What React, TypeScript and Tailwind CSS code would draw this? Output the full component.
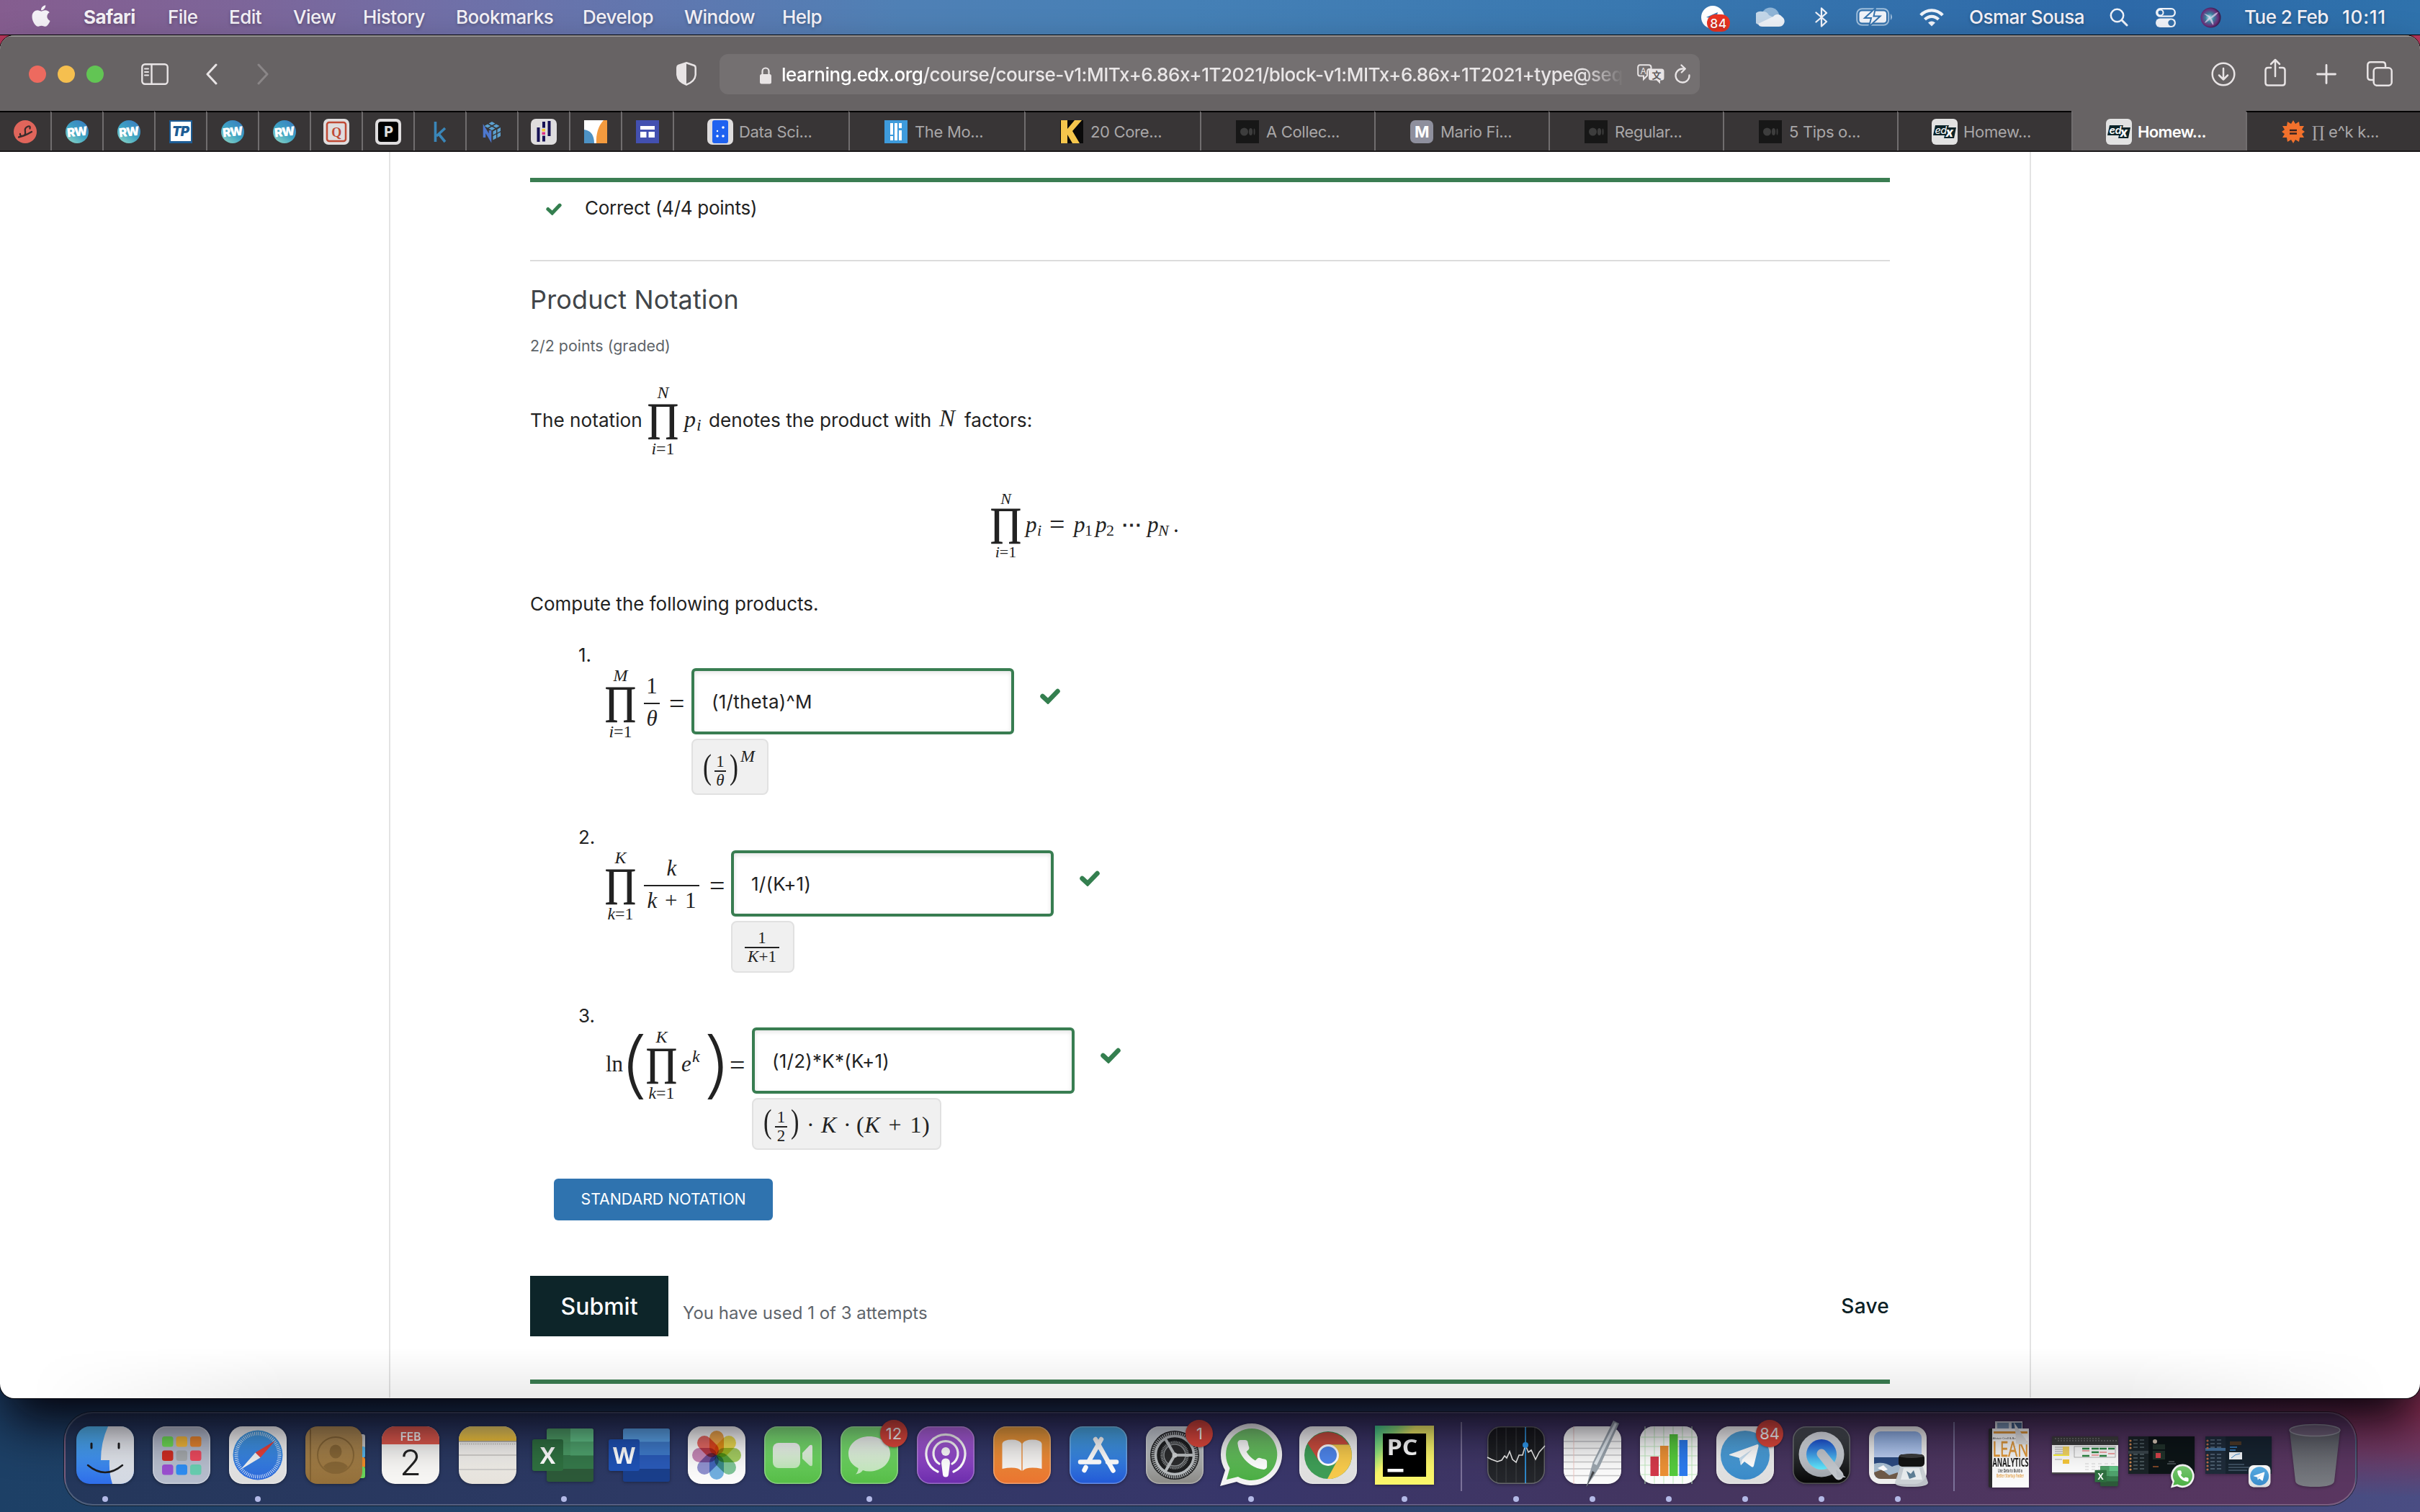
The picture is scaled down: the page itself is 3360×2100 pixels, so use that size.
import React from "react";
import type { ReactNode } from "react";
import { FaApple } from "react-icons/fa";

/* ---------------------------------------------------------------- menu bar */

const MENUS: { label: string; cls: string }[] = [
  { label: "Safari", cls: "w-[117px] font-bold" },
  { label: "File", cls: "w-[85px] font-medium" },
  { label: "Edit", cls: "w-[89px] font-medium" },
  { label: "View", cls: "w-[97px] font-medium" },
  { label: "History", cls: "w-[129px] font-medium" },
  { label: "Bookmarks", cls: "w-[176px] font-medium" },
  { label: "Develop", cls: "w-[141px] font-medium" },
  { label: "Window", cls: "w-[136px] font-medium" },
  { label: "Help", cls: "w-[70px] font-medium" },
];

function MenuBar() {
  return (
    <header className="flex h-12 shrink-0 items-center bg-[linear-gradient(to_right,#855d8f_0px,#7d6599_330px,#6f70a8_640px,#5e78b0_950px,#4f80b5_1250px,#4580b6_1650px,#3978b0_2250px,#2d69a8_2950px,#2f72ac_3360px)] text-[26px] leading-none tracking-[-0.02em] text-[#f4f1f6] [text-shadow:0_2px_4px_rgba(0,0,0,0.25)]">
      <FaApple className="ml-[40px] h-[34px] w-[34px] -translate-y-[2px]" />
      <nav className="ml-[42px] flex">
        {MENUS.map((m) => (
          <span key={m.label} className={m.cls}>
            {m.label}
          </span>
        ))}
      </nav>
      <div className="ml-auto flex h-full items-center font-medium">
        <svg className="h-[48px] w-[44px]" viewBox="0 0 44 48">
          <circle cx="18" cy="24" r="16" fill="#fff" />
          <path d="M9 24 L25 17 L24 21 L15 25 Z" fill="#3a75ad" />
          <rect x="10" y="20" width="32" height="24" rx="12" fill="#ec3323" />
          <text x="26" y="38.5" textAnchor="middle" fontSize="17.5" fontWeight="500" fill="#fff" fontFamily="Inter, sans-serif" letterSpacing="0.5">84</text>
        </svg>
        <svg className="ml-[34px] h-[28px] w-[40px]" viewBox="0 0 40 28">
          <circle cx="20" cy="13" r="12.5" fill="#8fb4d6" />
          <path d="M9 6 a9 9 0 0 1 9 5 L26 15 L3 24 A9.500 9.500 0 0 1 9 6 Z" fill="#c3d6e8" />
          <path d="M3 23 L24 13 C27 9 33 9 36 13 C43 18 39 27 32 27 H9 C6 27 4 26 3 23 Z" fill="#edf1f7" />
        </svg>
        <svg className="ml-[42px] h-[28px] w-[18px]" viewBox="0 0 18 28" fill="none" stroke="#f1f2f8" strokeWidth="2.300" strokeLinejoin="round" strokeLinecap="round">
          <path d="M1.500 7.500 L16 20 L9 26.500 V1.500 L16 8 L1.500 20.500" />
        </svg>
        <svg className="ml-[39px] h-[26px] w-[52px]" viewBox="0 0 52 26">
          <rect x="1.200" y="1.200" width="44" height="22.600" rx="7" fill="none" stroke="#9fbedb" strokeWidth="2" />
          <rect x="4.500" y="4.500" width="37.500" height="16" rx="4" fill="#f0f3f9" />
          <path d="M48 8 q4 4.500 0 9 Z" fill="#9fbedb" />
          <path d="M27 0 L12 14 H21 L18 26 L33.500 11.500 H24.500 Z" fill="#f0f3f9" stroke="#3573ae" strokeWidth="2" />
        </svg>
        <svg className="ml-[36px] h-[25px] w-[34px]" viewBox="0 0 34 25" fill="none" stroke="#f0f3f9" strokeWidth="4.200">
          <path d="M1.800 9.200 C10 0 24 0 32.200 9.200" />
          <path d="M7.500 15 C13 9.500 21 9.500 26.500 15" />
          <path d="M12 19.500 Q17 15.500 22 19.500 L17 24.500 Z" fill="#f0f3f9" stroke="none" />
        </svg>
        <span className="ml-[35px] w-[164px]">Osmar Sousa</span>
        <svg className="ml-[31px] h-[26px] w-[26px]" viewBox="0 0 26 26" fill="none" stroke="#f0f3f9" strokeLinecap="round">
          <circle cx="10.500" cy="10.500" r="8.700" strokeWidth="2.500" />
          <path d="M17 17 L24 24" strokeWidth="3" />
        </svg>
        <svg className="ml-[38px] h-[27px] w-[28px]" viewBox="0 0 28 27">
          <rect x="1.200" y="1.200" width="25.600" height="10.500" rx="5.200" fill="none" stroke="#f0f3f9" strokeWidth="2.300" />
          <circle cx="6.500" cy="6.500" r="4" fill="none" stroke="#f0f3f9" strokeWidth="2" />
          <rect x="0" y="14.500" width="28" height="12.500" rx="6.200" fill="#f0f3f9" />
          <circle cx="21.500" cy="20.700" r="4.200" fill="#3570aa" />
        </svg>
        <svg className="ml-[34px] h-[29px] w-[29px]" viewBox="0 0 29 29">
          <defs>
            <radialGradient id="siri" cx="0.45" cy="0.5" r="0.6">
              <stop offset="0" stopColor="#b7f0f2" />
              <stop offset="0.35" stopColor="#3a7f9e" />
              <stop offset="0.7" stopColor="#6b2f7c" />
              <stop offset="1" stopColor="#1c1430" />
            </radialGradient>
          </defs>
          <circle cx="14.500" cy="14.500" r="14" fill="url(#siri)" />
          <path d="M5 9 Q12 10 14.500 14.500 Q19 8 25 7 Q21 13 15 15.500 Q19 20 18 25 Q14 21 13.500 16.500 Q9 21 6 22 Q8 17 12.500 14.500 Q8 12 5 9Z" fill="#e9d3f0" opacity="0.7" />
        </svg>
        <span className="ml-[32px] w-[136px]">Tue 2 Feb</span>
        <span className="w-[108px] tracking-[0.03em]">10:11</span>
      </div>
    </header>
  );
}

/* ----------------------------------------------------------------- toolbar */

function Toolbar() {
  return (
    <div className="flex h-[105px] shrink-0 items-center border-t-2 border-[#959293] bg-[#676364]">
      <div className="ml-[40px] flex gap-4">
        <span className="size-6 rounded-full bg-[#ed6a5f]" />
        <span className="size-6 rounded-full bg-[#f5bf4f]" />
        <span className="size-6 rounded-full bg-[#62c554]" />
      </div>
      <svg className="ml-[52px] h-[30px] w-[38px]" viewBox="0 0 38 30" fill="none" stroke="#e8e4e5" strokeWidth="2.400" strokeLinecap="round">
        <rect x="1.300" y="1.300" width="35.400" height="27.400" rx="4" />
        <path d="M14.500 1.500 V28.500" />
        <path d="M5 7.500 H10 M5 12 H10 M5 16.500 H10" strokeWidth="2" />
      </svg>
      <svg className="ml-[51px] h-[30px] w-[18px]" viewBox="0 0 18 30" fill="none" stroke="#e8e4e5" strokeWidth="3" strokeLinecap="round" strokeLinejoin="round">
        <path d="M15 2 L3 15 L15 28" />
      </svg>
      <svg className="ml-[53px] h-[30px] w-[18px]" viewBox="0 0 18 30" fill="none" stroke="#8a8687" strokeWidth="3" strokeLinecap="round" strokeLinejoin="round">
        <path d="M3 2 L15 15 L3 28" />
      </svg>
      <svg className="ml-[565px] h-[33px] w-[28px]" viewBox="0 0 28 33">
        <path d="M14 1.300 L25 5 Q26.700 5.800 26.700 8 V18 Q26 27 14 31.700 Q2 27 1.300 18 V8 Q1.300 5.800 3 5 Z" fill="none" stroke="#e8e4e5" strokeWidth="2.500" />
        <path d="M14 1.300 L3 5 Q1.300 5.800 1.300 8 V18 Q2 27 14 31.700 Z" fill="#e8e4e5" />
      </svg>
      <div className="ml-[32px] flex h-14 w-[1361px] items-center rounded-[12px] bg-[#747071] text-[26px] leading-none tracking-[-0.0185em]">
        <svg className="ml-[56px] h-6 w-4 translate-y-[2px]" viewBox="0 0 16 24">
          <path d="M3.500 11 V6 a4.500 4.500 0 0 1 9 0 V11" fill="none" stroke="#e8e4e5" strokeWidth="2.200" />
          <rect x="0" y="10" width="16" height="13.500" rx="2.500" fill="#e8e4e5" />
        </svg>
        <div className="ml-[14px] flex h-10 w-[1171px] items-center overflow-hidden whitespace-nowrap pt-[3px] font-medium [mask-image:linear-gradient(to_right,black_1112px,transparent_1169px)]">
          <span className="text-white">learning.edx.org</span>
          <span className="text-[#e9e6e7]">/course/course-v1:MITx+6.86x+1T2021/block-v1:MITx+6.86x+1T2021+type@sequ</span>
        </div>
        <svg className="ml-[17px] h-[28px] w-[38px]" viewBox="0 0 38 28">
          <path d="M4 1.200 H16 Q19.500 1.200 19.500 4.500 V7 H17 Q14 7 14 11 V16 L9 21 V16.500 H4 Q1.200 16.500 1.200 13.500 V4.500 Q1.200 1.200 4 1.200 Z" fill="none" stroke="#e8e4e5" strokeWidth="2" />
          <text x="8.500" y="13.500" textAnchor="middle" fontSize="12" fontFamily="Inter, sans-serif" fill="#e8e4e5">A</text>
          <path d="M19 6.500 H34 Q37.500 6.500 37.500 10 V19 Q37.500 22.500 34 22.500 H32 V27.500 L27 22.500 H19 Q16 22.500 16 19 V10 Q16 6.500 19 6.500 Z" fill="#e8e4e5" />
          <text x="26.700" y="19.500" textAnchor="middle" fontSize="13" fontWeight="700" fontFamily="'Noto Sans CJK SC', sans-serif" fill="#5f5b5c">文</text>
        </svg>
        <svg className="ml-[14px] h-[27px] w-[22px]" viewBox="0 0 22 27" fill="none" stroke="#e8e4e5" strokeWidth="2.300" strokeLinecap="round" strokeLinejoin="round">
          <path d="M20.500 15.500 A9.500 9.500 0 1 1 11 6.500 H14" />
          <path d="M9.500 1.500 L14.800 6.500 L9.800 11.500" />
        </svg>
      </div>
      <div className="ml-auto flex items-center">
        <svg className="size-[34px]" viewBox="0 0 34 34" fill="none" stroke="#e8e4e5" strokeWidth="2.500" strokeLinecap="round" strokeLinejoin="round">
          <circle cx="17" cy="17" r="15.300" />
          <path d="M17 9 V24 M11 18.500 L17 24.500 L23 18.500" />
        </svg>
        <svg className="ml-[40px] h-[40px] w-[30px] -translate-y-[2px]" viewBox="0 0 30 40" fill="none" stroke="#e8e4e5" strokeWidth="2.500" strokeLinecap="round" strokeLinejoin="round">
          <path d="M9 13 H5 Q1.500 13 1.500 16.500 V34 Q1.500 37.500 5 37.500 H25 Q28.500 37.500 28.500 34 V16.500 Q28.500 13 25 13 H21" />
          <path d="M15 25 V2 M9 8 L15 2 L21 8" />
        </svg>
        <svg className="ml-[42px] size-[28px]" viewBox="0 0 28 28" fill="none" stroke="#e8e4e5" strokeWidth="2.800" strokeLinecap="round">
          <path d="M14 1.500 V26.500 M1.500 14 H26.500" />
        </svg>
        <svg className="mr-[38px] ml-[42px] h-[35px] w-[36px]" viewBox="0 0 36 35" fill="none" stroke="#e8e4e5" strokeWidth="2.500" strokeLinejoin="round">
          <rect x="9.700" y="9.300" width="25" height="24.500" rx="4.500" />
          <path d="M9 26 H5.500 Q1.300 26 1.300 22 V5.500 Q1.300 1.300 5.500 1.300 H22 Q26 1.300 26 5.500 V8.500" />
        </svg>
      </div>
    </div>
  );
}

/* -------------------------------------------------------------- favicons */

const SANS = "Inter, 'Liberation Sans', sans-serif";

const RwIcon = () => (
  <svg className="size-8" viewBox="0 0 32 32">
    <defs>
      <linearGradient id="rw" x1="0.1" y1="1" x2="0.8" y2="0">
        <stop offset="0" stopColor="#8fd6c4" />
        <stop offset="0.5" stopColor="#3ea4c4" />
        <stop offset="1" stopColor="#3a7fc0" />
      </linearGradient>
    </defs>
    <circle cx="16" cy="16" r="16" fill="url(#rw)" />
    <text x="15.500" y="22" textAnchor="middle" fontSize="17" fontWeight="900" letterSpacing="-1.500" fill="#fff" fontFamily={SANS} transform="rotate(-6 16 16)">RW</text>
  </svg>
);
const ScribdIcon = () => (
  <svg className="size-8" viewBox="0 0 32 32">
    <circle cx="16" cy="16" r="16" fill="#e0655b" />
    <path d="M22.500 11.500 Q23.500 7.500 20 8.500 Q14.500 10.500 16 16 Q17 21.500 12 22 Q8.500 22 9 19 M7 23.500 Q15 22 25 16" fill="none" stroke="#3a2b2c" strokeWidth="2.300" strokeLinecap="round" />
  </svg>
);
const TpIcon = () => (
  <svg className="size-8" viewBox="0 0 32 32">
    <rect width="32" height="32" fill="#1d5c94" />
    <rect x="2" y="2" width="28" height="27" fill="#fff" />
    <text x="15.500" y="22" textAnchor="middle" fontSize="18.500" fontStyle="italic" fontWeight="900" letterSpacing="-0.800" fill="#1d5c94" fontFamily={SANS}>TP</text>
  </svg>
);
const QIcon = () => (
  <svg className="size-9" viewBox="0 0 36 36">
    <rect width="36" height="36" rx="7" fill="#dfddde" />
    <rect x="5" y="5" width="26" height="26" rx="3" fill="none" stroke="#c04a35" strokeWidth="2.500" />
    <text x="18" y="24.500" textAnchor="middle" fontSize="18" fontWeight="700" fill="#c04a35" fontFamily="'Liberation Serif', serif">Q</text>
  </svg>
);
const PIcon = () => (
  <svg className="size-9" viewBox="0 0 36 36">
    <rect width="36" height="36" rx="7" fill="#dfddde" />
    <rect x="4" y="4" width="28" height="28" rx="4" fill="#000" />
    <text x="18.500" y="25" textAnchor="middle" fontSize="19.500" fontWeight="800" fill="#ddd" fontFamily={SANS}>P</text>
  </svg>
);
const KaggleIcon = () => (
  <svg className="size-8" viewBox="0 0 32 32">
    <path d="M9.500 2 V30 M23 11 L11 22 M14 19 L23 30" fill="none" stroke="#3a86b8" strokeWidth="3.600" />
  </svg>
);
const NumpyIcon = () => (
  <svg className="size-8" viewBox="0 0 32 32">
    <g fill="#5ba0cf">
      <path d="M16 2 L20.500 4.500 L16 7 L11.500 4.500Z M10 5.500 L14.500 8 L10 10.500 L5.500 8Z M22 5.500 L26.500 8 L22 10.500 L17.500 8Z M16 9 L20.500 11.500 L16 14 L11.500 11.500Z" />
      <path d="M17.500 15.500 L22 13 V18 L17.500 20.500Z M23.500 12.500 L28 10 V15 L23.500 17.500Z M17.500 22 L22 19.500 V25 L17.500 27.500Z M23.500 19 L28 16.500 V22 L23.500 24.500Z" />
    </g>
    <path d="M5.500 24 V11.500 L13.500 25 V14" fill="none" stroke="#4d77cf" strokeWidth="3.600" />
  </svg>
);
const PandasIcon = () => (
  <svg className="size-9" viewBox="0 0 36 36">
    <rect width="36" height="36" rx="7" fill="#dfddde" />
    <path d="M8.500 12 h4 V32 h-4Z M16 4 h4 v8.500 h-4Z M16 23.500 h4 v8 h-4Z M23.500 3 h4 V24 h-4Z" fill="#171256" />
    <rect x="15.500" y="14" width="4.500" height="3.500" fill="#f5c633" />
    <rect x="15.500" y="18.500" width="4.500" height="3.500" fill="#dd2f83" />
  </svg>
);
const SwooshIcon = () => (
  <svg className="size-8" viewBox="0 0 32 32">
    <rect width="32" height="32" fill="#fff" />
    <path d="M32 0 V32 H17 Q16 12 27 0Z" fill="#f39a3e" />
    <path d="M0 13 Q14 15 14 32 H0Z" fill="#4d92c5" />
  </svg>
);
const FormsIcon = () => (
  <svg className="size-8" viewBox="0 0 32 32">
    <rect width="32" height="32" fill="#4350b0" />
    <path d="M6 8 H26 V13 H6Z M6 16 H14.500 V24 H6Z M17.500 16 H26 V24 H17.500Z" fill="#fff" />
  </svg>
);
const DiceIcon = () => (
  <svg className="size-9" viewBox="0 0 36 36">
    <rect width="36" height="36" rx="7" fill="#dfddde" />
    <rect x="7" y="2" width="22" height="32" rx="3" fill="#1f62f0" />
    <g fill="#fff">
      <circle cx="14" cy="24" r="1.800" />
      <circle cx="22" cy="24" r="1.800" />
      <circle cx="14" cy="17" r="1.200" />
      <circle cx="22" cy="12" r="1.800" />
    </g>
  </svg>
);
const BarsIcon = () => (
  <svg className="size-8" viewBox="0 0 32 32">
    <rect width="32" height="32" fill="#3e9bdc" />
    <path d="M8 4 h4 V20 h-4Z M8 22 h4 V28 h-4Z M14 4 h4 V28 h-4Z M20 4 h4 V11 h-4Z M20 14 h4 V28 h-4Z" fill="#fff" />
  </svg>
);
const KdIcon = () => (
  <svg className="size-8" viewBox="0 0 32 32">
    <rect width="32" height="32" fill="#0a0a0a" />
    <path d="M1 0 H10 V12 L20 0 H30 L17 15 L27 32 H17 L10 20 V32 H1Z" fill="#f5c64c" />
  </svg>
);
const MediumIcon = () => (
  <svg className="size-8" viewBox="0 0 32 32">
    <rect width="32" height="32" fill="#171717" />
    <g fill="#3d3d3d">
      <circle cx="11.500" cy="16" r="5.500" />
      <ellipse cx="20.500" cy="16" rx="2.600" ry="5" />
      <ellipse cx="25.500" cy="16" rx="1" ry="4.500" />
    </g>
  </svg>
);
const MIcon = () => (
  <span className="flex size-8 items-center justify-center rounded-[7px] bg-[#8e8f9d] text-[22px] leading-none font-bold text-white">M</span>
);
const EdxIcon = () => (
  <svg className="size-9" viewBox="0 0 36 36">
    <rect width="36" height="36" rx="6" fill="#e2e2e2" />
    <path d="M5 9 H24 L23 12 H34 L31 27 H17 L18 23 H2Z" fill="#0c2328" />
    <text x="4.500" y="20.500" fontSize="14.500" fontStyle="italic" fill="#fff" fontFamily={SANS} letterSpacing="-0.500">ed</text>
    <text x="19.500" y="25" fontSize="17.500" fontStyle="italic" fontWeight="800" fill="#fff" fontFamily={SANS}>x</text>
  </svg>
);
const WolframIcon = () => (
  <svg className="size-8" viewBox="0 0 32 32">
    <path d="M16 0 L19 5 L24 2 L25 8 L31 8 L28 13 L32 16 L28 19 L31 24 L25 24 L24 30 L19 27 L16 32 L13 27 L8 30 L7 24 L1 24 L4 19 L0 16 L4 13 L1 8 L7 8 L8 2 L13 5Z" fill="#f2712c" />
    <path d="M11 14 H21 M11 18.500 H21" stroke="#3a2320" strokeWidth="2.400" />
  </svg>
);

const PINNED: ReactNode[] = [
  <ScribdIcon />, <RwIcon />, <RwIcon />, <TpIcon />, <RwIcon />, <RwIcon />, <QIcon />,
  <PIcon />, <KaggleIcon />, <NumpyIcon />, <PandasIcon />, <SwooshIcon />, <FormsIcon />,
];

const TABS: { icon: ReactNode; label: ReactNode; width: string; active?: boolean }[] = [
  { icon: <DiceIcon />, label: "Data Sci...", width: "w-[244px]" },
  { icon: <BarsIcon />, label: "The Mo...", width: "w-[244px]" },
  { icon: <KdIcon />, label: "20 Core...", width: "w-[244px]" },
  { icon: <MediumIcon />, label: "A Collec...", width: "w-[242px]" },
  { icon: <MIcon />, label: "Mario Fi...", width: "w-[242px]" },
  { icon: <MediumIcon />, label: "Regular...", width: "w-[242px]" },
  { icon: <MediumIcon />, label: "5 Tips o...", width: "w-[242px]" },
  { icon: <EdxIcon />, label: "Homew...", width: "w-[242px]" },
  { icon: <EdxIcon />, label: "Homew...", width: "w-[242px]", active: true },
  { icon: <WolframIcon />, label: <><span className="font-['DejaVu_Serif',serif]">∏</span> e^k k...</>, width: "grow" },
];

function TabBar() {
  return (
    <div className="flex h-[57px] shrink-0 border-b-2 border-[#1a1819] bg-[#383536] text-[22px] leading-none tracking-[-0.015em] text-[#a9a7a8]">
      {PINNED.map((icon, i) => (
        <div key={i} className={`flex h-full items-center justify-center border-t-2 border-t-black ${i ? "w-[72px] border-l-2 border-l-[#706d6e]" : "w-[70px]"}`}>
          {icon}
        </div>
      ))}
      {TABS.map((t, i) => (
        <div
          key={i}
          className={`flex h-full items-center border-t-2 border-l-2 border-l-[#706d6e] pl-[46px] ${t.width} ${
            t.active ? "border-t-[#676364] bg-[#676364] font-semibold tracking-[-0.03em] text-white" : "border-t-black"
          }`}
        >
          <span className="flex w-9 justify-center">{t.icon}</span>
          <span className="ml-2 pt-px">{t.label}</span>
        </div>
      ))}
    </div>
  );
}

/* ------------------------------------------------------------------- maths */

const SERIF = "font-['Liberation_Serif',serif]";

/** One glyph run of a formula; its vertical place comes from a top margin. */
function G({ className, children }: { className: string; children: ReactNode }) {
  return <span className={`block shrink-0 leading-none whitespace-nowrap ${className}`}>{children}</span>;
}

function Prod({ upper, index, display }: { upper: string; index: string; display?: boolean }) {
  return (
    <span className="flex w-[41px] shrink-0 flex-col items-center leading-none">
      <span className={`italic ${display ? "h-[15px] text-[22px]" : "h-[19px] text-[24px]"}`}>{upper}</span>
      <span className={`text-[55px] [-webkit-text-stroke:1.2px_#222] ${display ? "h-[59px]" : "h-[58px]"}`}>∏</span>
      <span className={`whitespace-nowrap ${display ? "text-[22px]" : "mt-px text-[24px]"}`}>
        <i>{index}</i>=1
      </span>
    </span>
  );
}

function Frac({ top, bottom, width }: { top: ReactNode; bottom: ReactNode; width: string }) {
  return (
    <span className={`mt-[11px] flex shrink-0 flex-col items-center text-[31px] leading-none ${width}`}>
      <span className="h-[39px]">{top}</span>
      <span className="h-[2px] w-full bg-[#222]" />
      <span className="mt-1 whitespace-nowrap">{bottom}</span>
    </span>
  );
}

function SmallFrac({ top, bottom, width }: { top: ReactNode; bottom: ReactNode; width: string }) {
  return (
    <span className={`flex shrink-0 flex-col items-center text-[23px] leading-none ${width}`}>
      <span className="h-[24px]">{top}</span>
      <span className="h-[2px] w-full bg-[#222]" />
      <span className="whitespace-nowrap">{bottom}</span>
    </span>
  );
}

const Check = ({ className }: { className: string }) => (
  <svg className={className} viewBox="0 0 28 22">
    <path d="M3.500 11 L11 18 L24.500 4" fill="none" stroke="#347f4f" strokeWidth="6.500" strokeLinejoin="miter" strokeLinecap="round" />
  </svg>
);

function Answer({ value, previewClass, children }: { value: string; previewClass: string; children: ReactNode }) {
  return (
    <>
      <div className="flex shrink-0 flex-col items-start">
        <div className="flex h-[92px] w-[448px] items-center rounded-[6px] border-4 border-[#387d51] bg-white pt-[2px] pl-[24px] text-[26px] leading-none tracking-[0.01em] inset-shadow-[0_2px_6px_rgba(0,0,0,0.12)] font-['Inter',sans-serif]">
          {value}
        </div>
        <div className={`mt-[6px] flex items-start rounded-[8px] border-2 border-[#e1e1e1] bg-[#f0f0f0] ${previewClass}`}>{children}</div>
      </div>
      <Check className="mt-[28px] ml-[36px] h-[22px] w-[28px] shrink-0" />
    </>
  );
}

function Item({ n, className, children }: { n: number; className: string; children: ReactNode }) {
  return (
    <li className={`${className} pl-[67px]`}>
      <div className="h-[30px] pt-px text-[26px] leading-none">{n}.</div>
      <div className={`ml-[38px] flex items-start ${SERIF}`}>{children}</div>
    </li>
  );
}

/* ------------------------------------------------------------ page content */

function Problem() {
  return (
    <main className="mx-[540px] flex h-[1730px] flex-col border-x-2 border-[#e3e3e3] px-[194px] font-['Inter',sans-serif] text-[#222]">
      <div className="mt-9 h-[6px] shrink-0 bg-[#3b7d52]" />
      <div className="flex h-[108px] shrink-0 items-start pt-[23px]">
        <Check className="mt-[6px] ml-[22px] h-[17px] w-[22px]" />
        <span className="ml-[32px] text-[26px] leading-none tracking-[-0.01em]">Correct (4/4 points)</span>
      </div>
      <div className="h-[2px] shrink-0 bg-[#dcdcdc]" />

      <h3 className="mt-[35px] text-[36px] leading-none tracking-[0.004em] text-[#414549]">Product Notation</h3>
      <p className="mt-[36px] h-[22px] text-[21.400px] leading-none text-[#5e6469]">2/2 points (graded)</p>

      <div className={`mt-[41px] flex h-[149px] items-start ${SERIF}`}>
        <G className="mt-[38px] w-[164px] text-[26.200px] font-['Inter',sans-serif]">The notation</G>
        <Prod upper="N" index="i" />
        <G className="mt-[33px] ml-[9px] w-[17px] text-[32px] italic">p</G>
        <G className="mt-[45px] w-[17px] text-[24px] italic">i</G>
        <G className="mt-[38px] w-[320px] text-[26.200px] font-['Inter',sans-serif]">denotes the product with</G>
        <G className="mt-[32px] w-[35px] text-[33px] italic">N</G>
        <G className="mt-[38px] text-[26.200px] font-['Inter',sans-serif]">factors:</G>
      </div>

      <div className={`flex h-[142px] items-start pl-[640px] ${SERIF}`}>
        <Prod upper="N" index="i" display />
        <G className="mt-[31px] ml-[7px] w-[16px] text-[31px] italic">p</G>
        <G className="mt-[44px] w-[17px] text-[22px] italic">i</G>
        <G className="mt-[27px] w-[34px] text-[38px]">=</G>
        <G className="mt-[31px] w-[15px] text-[31px] italic">p</G>
        <G className="mt-[44px] w-[15px] text-[22px]">1</G>
        <G className="mt-[31px] w-[15px] text-[31px] italic">p</G>
        <G className="mt-[44px] w-[21px] text-[22px]">2</G>
        <G className="mt-[33px] w-[36px] text-[28px] [-webkit-text-stroke:0.8px_#222]">⋯</G>
        <G className="mt-[31px] w-[15px] text-[31px] italic">p</G>
        <G className="mt-[44px] w-[20px] text-[22px] italic">N</G>
        <G className="mt-[31px] ml-px text-[31px]">.</G>
      </div>

      <p className="mt-[2px] text-[26px] leading-none">Compute the following products.</p>

      <ol className="mt-[44px]">
        <Item n={1} className="h-[253px]">
          <Prod upper="M" index="i" />
          <Frac top="1" bottom={<i>θ</i>} width="ml-[12px] w-[22px]" />
          <G className="mt-[32px] ml-[13px] w-[31px] text-[38px]">=</G>
          <div className="mt-[2px] flex items-start">
            <Answer value="(1/theta)^M" previewClass="h-[78px] w-[107px]">
              <G className="mt-[13px] ml-[14px] w-[16px] origin-left scale-x-75 text-[48px]">(</G>
              <SmallFrac top="1" bottom={<i>θ</i>} width="mt-[18px] w-[16px]" />
              <G className="mt-[13px] ml-[5px] w-[15px] origin-left scale-x-75 text-[48px]">)</G>
              <G className="mt-[10px] text-[24px] italic">M</G>
            </Answer>
          </div>
        </Item>
        <Item n={2} className="h-[248px]">
          <Prod upper="K" index="k" />
          <Frac top={<i>k</i>} bottom={<><i>k</i> + 1</>} width="ml-[12px] w-[77px] [word-spacing:3px]" />
          <G className="mt-[32px] ml-[14px] w-[30px] text-[38px]">=</G>
          <div className="mt-[2px] flex items-start">
            <Answer value="1/(K+1)" previewClass="h-[72px] w-[88px]">
              <SmallFrac top="1" bottom={<><i>K</i>+1</>} width="mt-[10px] ml-[17px] w-[48px]" />
            </Answer>
          </div>
        </Item>
        <Item n={3} className="h-[240px]">
          <G className="mt-[35px] w-[32px] text-[31px]">ln</G>
          <G className="-ml-[16px] w-[41px] origin-left scale-x-[1.350] text-[100px] font-extralight font-['Inter',sans-serif]">(</G>
          <div className="mt-px flex">
            <Prod upper="K" index="k" />
          </div>
          <G className="mt-[35px] ml-[7px] w-[15px] text-[31px] italic">e</G>
          <G className="mt-[28px] w-[14px] text-[24px] italic">k</G>
          <G className="-ml-px w-[39px] origin-left scale-x-[1.350] text-[100px] font-extralight font-['Inter',sans-serif]">)</G>
          <G className="mt-[33px] w-[31px] text-[38px]">=</G>
          <Answer value="(1/2)*K*(K+1)" previewClass="h-[72px] w-[263px]">
            <G className="mt-[8px] ml-[14px] w-[16px] origin-left scale-x-75 text-[46px]">(</G>
            <SmallFrac top="1" bottom="2" width="mt-[13px] w-[17px]" />
            <G className="mt-[8px] ml-[5px] w-[22px] origin-left scale-x-75 text-[46px]">)</G>
            <G className="mt-[19px] w-[20px] text-[32px]">·</G>
            <G className="mt-[19px] w-[31px] text-[32px] italic">K</G>
            <G className="mt-[19px] w-[18px] text-[32px]">·</G>
            <G className="mt-[19px] text-[32px] tracking-[0.015em] [word-spacing:3px]">
              (<i>K</i> + 1)
            </G>
          </Answer>
        </Item>
      </ol>

      <button className="ml-[33px] h-[58px] w-[304px] shrink-0 rounded-[6px] bg-[#2f73af] text-[21.300px] leading-none text-white">STANDARD NOTATION</button>

      <div className="mt-[77px] flex h-[84px] shrink-0 items-center">
        <button className="h-full w-[192px] bg-[#0d2529] pt-[2px] text-[32px] leading-none font-medium text-white">Submit</button>
        <span className="mt-[20px] ml-[20px] text-[24px] leading-none text-[#5f656b]">You have used 1 of 3 attempts</span>
        <span className="mr-px ml-auto text-[28px] leading-none font-medium tracking-[0.01em] text-[#0c2126]">Save</span>
      </div>
      <div className="mt-[60px] h-[6px] shrink-0 bg-[#3b7d52]" />
    </main>
  );
}

/* -------------------------------------------------------------- dock icons */

const Tile = ({ fill, children }: { fill: string; children?: ReactNode }) => (
  <>
    <rect width="80" height="80" rx="18.500" fill={fill} />
    {children}
    <rect x="0.750" y="0.750" width="78.500" height="78.500" rx="18" fill="none" stroke="#fff" strokeOpacity="0.3" strokeWidth="1.500" />
  </>
);

/** Two stop vertical gradient. */
const Grad = ({ id, from, to }: { id: string; from: string; to: string }) => (
  <linearGradient id={id} x1="0" y1="0" x2="0" y2="1">
    <stop offset="0" stopColor={from} />
    <stop offset="1" stopColor={to} />
  </linearGradient>
);

const PHONE =
  "M22 16.920v3a2 2 0 0 1-2.180 2 19.790 19.790 0 0 1-8.630-3.070 19.500 19.500 0 0 1-6-6 19.790 19.790 0 0 1-3.070-8.670A2 2 0 0 1 4.110 2h3a2 2 0 0 1 2 1.720 12.840 12.840 0 0 0 .7 2.810 2 2 0 0 1-.45 2.110L8.090 9.910a16 16 0 0 0 6 6l1.270-1.270a2 2 0 0 1 2.110-.45 12.840 12.840 0 0 0 2.810.7A2 2 0 0 1 22 16.920z";

const WhatsAppArt = () => (
  <>
    <path d="M41 -4 A43 43 0 1 1 20 77 L-3 83 L4 61 A43 43 0 0 1 41 -4Z" fill="#f4f4f4" />
    <path d="M41 3 A36 36 0 1 1 22 70 L6 74 L10.500 58 A36 36 0 0 1 41 3Z" fill="url(#wa)" />
    <g transform="translate(17 15) scale(2.050)">
      <path d={PHONE} fill="#fff" />
    </g>
  </>
);

const TelegramArt = () => (
  <>
    <Tile fill="url(#tile)" />
    <circle cx="40" cy="40" r="34" fill="url(#tg)" />
    <path d="M18 39 L57 25 Q59 25 58.500 28 L52 55 Q51 58 48.500 56 L39 49 L34 54 L32 44 L18 40 Z" fill="#fff" />
    <path d="M32 44 L50 32 L36 46 L34 54Z" fill="#c9dff0" />
  </>
);

const ExcelArt = ({ word }: { word?: boolean }) => {
  const c = word
    ? ["#5aa3e8", "#3f7bcb", "#2a5ab8", "#1a3f8c", "#1f52b5"]
    : ["#4fa167", "#4b9b65", "#35784a", "#2d5a39", "#2f7040"];
  return (
    <g transform="translate(3 0)">
      <rect x="13" y="3" width="65" height="74" rx="3" fill={c[3]} />
      <rect x="13" y="3" width="65" height="20" rx="3" fill={c[0]} />
      <rect x="13" y="21.500" width="65" height="19" fill={c[1]} />
      <rect x="13" y="40" width="65" height="19" fill={c[2]} />
      {!word && <path d="M46 3 H75 Q78 3 78 6 V21.500 H46Z" fill="#63c488" />}
      {!word && <rect x="46" y="21.500" width="32" height="19" fill="#4fa36d" />}
      <rect x="-7" y="18" width="43" height="44" rx="3" fill={c[4]} />
      <text x="14.500" y="51.500" textAnchor="middle" fontSize="32" fontWeight="700" fill="#fff" fontFamily="'Open Sans', sans-serif">{word ? "W" : "X"}</text>
    </g>
  );
};

const FinderArt = () => (
  <>
    <clipPath id="fclip"><rect width="80" height="80" rx="18.500" /></clipPath>
    <g clipPath="url(#fclip)">
      <rect width="80" height="80" fill="url(#finder)" />
      <path d="M44 0 Q34 22 34 47 H46 Q45 64 50 80 H80 V0Z" fill="url(#finderR)" />
    </g>
    <path d="M21 24 V30 M59 24 V30" stroke="#1c1c1e" strokeWidth="3" strokeLinecap="round" />
    <path d="M16 54 Q40 74 64 54" fill="none" stroke="#1c1c1e" strokeWidth="2.500" strokeLinecap="round" />
  </>
);

const PADS = ["#6fdc55", "#f3b83c", "#e8862f", "#cf2d22", "#a5a9ac", "#ec4a5e", "#9a4fd0", "#2f8cf0", "#67cdb0"];
const LaunchpadArt = () => (
  <Tile fill="#b6bdcd">
    {PADS.map((c, i) => (
      <rect key={c} x={13 + (i % 3) * 19.5} y={14 + Math.floor(i / 3) * 19.5} width="15.500" height="14.500" rx="3.500" fill={c} />
    ))}
  </Tile>
);

const SafariArt = () => (
  <Tile fill="url(#tile)">
    <circle cx="40" cy="40" r="34.500" fill="url(#saf)" />
    <circle cx="40" cy="40" r="30" fill="none" stroke="#fff" strokeWidth="5" strokeDasharray="0.900 1.720" opacity="0.85" />
    <path d="M64 20 L43.500 43.500 L36.500 36.500Z" fill="#e8413a" />
    <path d="M16 60 L36.500 36.500 L43.500 43.500Z" fill="#f3f3f3" />
  </Tile>
);

const ContactsArt = () => (
  <>
    <rect x="72" y="11" width="11" height="20" rx="3" fill="#c9c9c9" />
    <rect x="72" y="28" width="11" height="16" rx="3" fill="#56b3ea" />
    <rect x="72" y="43" width="11" height="15" rx="3" fill="#f18b28" />
    <rect x="72" y="56" width="11" height="16" rx="3" fill="#6ad45a" />
    <rect width="79" height="80" rx="17" fill="url(#con)" />
    <path d="M7 4 V76" stroke="#7b5c2f" strokeWidth="1.500" />
    <circle cx="42" cy="40" r="25" fill="none" stroke="#866636" strokeWidth="2" />
    <ellipse cx="42" cy="35" rx="8.500" ry="9.500" fill="#866636" />
    <path d="M25 56 Q30 49 42 49 Q54 49 59 56 Q52 65 42 65 Q32 65 25 56Z" fill="#866636" />
  </>
);

const CalendarArt = () => (
  <>
    <clipPath id="cclip"><rect width="80" height="80" rx="18.500" /></clipPath>
    <g clipPath="url(#cclip)">
      <rect width="80" height="80" fill="#f7f6f4" />
      <rect width="80" height="25" fill="#e25a4d" />
    </g>
    <text x="40" y="19.500" textAnchor="middle" fontSize="15.500" fontWeight="600" fill="#fff" fontFamily={SANS}>FEB</text>
    <text x="40" y="68" textAnchor="middle" fontSize="49" fontWeight="300" fill="#222" fontFamily={SANS}>2</text>
  </>
);

const NotesArt = () => (
  <>
    <clipPath id="nclip"><rect width="80" height="80" rx="18.500" /></clipPath>
    <g clipPath="url(#nclip)">
      <rect width="80" height="80" fill="url(#notes)" />
      <rect width="80" height="20.500" fill="url(#notesTop)" />
      <path d="M0 21 H80" stroke="#a9a59b" strokeWidth="1.500" />
      <path d="M0 40 H80 M0 60 H80" stroke="#d0cecb" strokeWidth="1.800" />
      <path d="M2 24.500 H80" stroke="#bdbab4" strokeWidth="1.500" strokeDasharray="1.500 1.500" />
    </g>
  </>
);

const PETALS = ["#f5a032", "#f0dc3a", "#9ccb4c", "#6fbf8b", "#5fa8e0", "#8284cc", "#c279b0", "#ea5850"];
const PhotosArt = () => (
  <Tile fill="#fbfbfb">
    {PETALS.map((c, i) => (
      <rect key={c} x="30" y="6" width="20" height="34" rx="10" fill={c} opacity="0.88" className="mix-blend-multiply" transform={`rotate(${i * 45} 40 40)`} />
    ))}
  </Tile>
);

const FaceTimeArt = () => (
  <Tile fill="url(#green)">
    <rect x="12" y="23" width="38" height="35" rx="8" fill="url(#soft)" />
    <path d="M53 37 L63 26.500 Q67 24 67 29 V52 Q67 57 63 54.500 L53 45Z" fill="url(#soft)" />
  </Tile>
);
const MessagesArt = () => (
  <Tile fill="url(#green)">
    <path d="M40 14 C56 14 69 24 69 38 C69 52 56 62.500 40 62.500 Q35 62.500 31 61 Q28 65.500 21 66.500 Q25 62 24.500 58 C16 54 11 47 11 38 C11 24 24 14 40 14Z" fill="url(#soft)" />
  </Tile>
);
const PodcastsArt = () => (
  <Tile fill="url(#pod)">
    <g fill="none" stroke="#fff" strokeWidth="3.200" strokeLinecap="round">
      <path d="M29 63 A27 27 0 1 1 51 63" />
      <path d="M31 52 A17 17 0 1 1 49 52" />
    </g>
    <circle cx="40" cy="35" r="6" fill="#fff" />
    <path d="M34 51 Q34 44.500 40 44.500 Q46 44.500 46 51 L44 67 Q43.500 70.500 40 70.500 Q36.500 70.500 36 67Z" fill="#fff" />
  </Tile>
);
const BooksArt = () => (
  <Tile fill="url(#books)">
    <path d="M39.300 62 Q33 55 12.500 59 V24 Q14 18.500 26 18.500 Q36 18.500 39.300 24Z" fill="#f6f4f2" />
    <path d="M40.700 62 Q47 55 67.500 59 V24 Q66 18.500 54 18.500 Q44 18.500 40.700 24Z" fill="#f6f4f2" />
  </Tile>
);
const AppStoreArt = () => (
  <Tile fill="url(#appst)">
    <g stroke="#fff" strokeWidth="6.500" strokeLinecap="round">
      <path d="M44 18 L27 48 M22.500 57 L20.500 61" />
      <path d="M36 18 L60.500 61.500" />
      <path d="M15 49.500 H41 M53 49.500 H65" />
    </g>
  </Tile>
);
const SettingsArt = () => (
  <Tile fill="url(#set)">
    <circle cx="40" cy="40" r="34" fill="#1e1f20" />
    <circle cx="40" cy="40" r="30" fill="none" stroke="#a9adaf" strokeWidth="5" strokeDasharray="1.600 1.200" />
    <circle cx="40" cy="40" r="26.500" fill="none" stroke="#b8bcbe" strokeWidth="3.500" />
    <circle cx="40" cy="40" r="18.500" fill="#2b2c2d" />
    <circle cx="40" cy="40" r="18" fill="none" stroke="#8b8f91" strokeWidth="3.500" strokeDasharray="1.200 1" />
    <circle cx="40" cy="40" r="15" fill="none" stroke="#8b8f91" strokeWidth="1.500" />
    <path d="M40 40 H66 M40 40 L27 17.500 M40 40 L27 62.500" stroke="#b8bcbe" strokeWidth="4" />
    <circle cx="40" cy="40" r="3.500" fill="#d0d3d4" />
  </Tile>
);
const ChromeArt = () => (
  <Tile fill="url(#tile)">
    <circle cx="40" cy="40" r="33" fill="#3f9e57" />
    <path d="M40 40 L11.500 23.500 A33 33 0 0 1 68.500 25.500 H40Z" fill="#d04f3f" />
    <path d="M11.500 23.500 L27 48 L40 25.500 H20Z" fill="#d04f3f" />
    <path d="M40 25.500 H69.500 A33 33 0 0 1 39 73 L53 47Z" fill="#f8cb4c" />
    <circle cx="40" cy="40" r="15" fill="#fff" />
    <circle cx="40" cy="40" r="12" fill="#4f86ec" />
  </Tile>
);
const PyCharmArt = () => (
  <>
    <rect x="-1" y="-1" width="82" height="82" fill="url(#pyc)" />
    <rect x="10" y="10" width="60" height="60" fill="#000" />
    <text x="15.500" y="40" fontSize="31" fontWeight="700" fill="#fff" fontFamily="'Open Sans', sans-serif" textLength="43" lengthAdjust="spacingAndGlyphs">PC</text>
    <rect x="16.500" y="59" width="22" height="4.500" fill="#fff" />
  </>
);
const ActivityArt = () => (
  <Tile fill="url(#act)">
    <path d="M13 2 V78 M26 2 V78 M40 2 V78 M66 2 V78" stroke="#4a4b4f" strokeWidth="0.800" />
    <path d="M53 1 V79" stroke="#2d86c7" strokeWidth="2" />
    <path d="M0 43 L6 46 L14 49 L20 47 L24 41 L27 44 L31 35 L35 46 L40 50 L44 40 L49 40 L53 26 L57 36 L61 33 L67 46 L72 36 L80 27" fill="none" stroke="#e9e9e9" strokeWidth="1.600" />
    <circle cx="53" cy="26" r="4" fill="#2f9af0" />
  </Tile>
);
const TextEditArt = () => (
  <>
    <Tile fill="#fbfbfb" />
    <path d="M0 21 H80 M0 30.500 H80 M0 40 H80 M0 49.500 H80 M0 59 H80 M2 68.500 H78" stroke="#c5c5c7" strokeWidth="1.300" />
    <path d="M14 0 V80" stroke="#ecc6c1" strokeWidth="1" />
    <path d="M69 -8 L77 -4 L50 56 L42 69 L31.500 84 L36 66 L40.500 50Z" fill="#9aa4ad" />
    <path d="M71 -5 L74 -3.500 L46 54 L42 52Z" fill="#dfe6ec" />
    <path d="M40 62 L43 64 L31.500 84Z" fill="#45484b" />
  </>
);
const NumbersArt = () => (
  <Tile fill="#fcfdfc">
    <path d="M0 15 H80 M0 28 H80 M0 41 H80 M0 54 H80 M0 67 H80 M7 0 V80 M20 0 V80 M33 0 V80 M46 0 V80 M59 0 V80 M72 0 V80" stroke="#bfe8bd" strokeWidth="1" />
    <rect x="14.500" y="42" width="11.500" height="27" fill="#d3394a" />
    <rect x="28" y="27" width="11.500" height="42" fill="#ec9135" />
    <rect x="41" y="11" width="11.500" height="58" fill="#56cb3d" />
    <rect x="54.500" y="19" width="11.500" height="50" fill="#2c7bee" />
  </Tile>
);
const QuickTimeArt = () => (
  <Tile fill="url(#qt)">
    <circle cx="40" cy="39" r="31.500" fill="url(#qring)" />
    <circle cx="40" cy="39" r="21" fill="url(#qblue)" />
    <path d="M40 38 L64 68" stroke="#c3c7cd" strokeWidth="13" strokeLinecap="round" />
    <path d="M60 60 L74 71 H62Z" fill="#b9bdc4" />
  </Tile>
);
const PreviewArt = () => (
  <>
    <rect x="0" y="0" width="80" height="80" rx="16" fill="#efefef" />
    <clipPath id="pvclip"><rect x="7" y="7" width="66" height="66" rx="9" /></clipPath>
    <g clipPath="url(#pvclip)">
      <rect x="7" y="7" width="66" height="37" fill="url(#sky)" />
      <rect x="7" y="43" width="66" height="30" fill="#2b4a80" />
      <path d="M7 52 Q20 48 32 56 Q44 50 73 56 V73 H7Z" fill="#a8bed2" />
      <path d="M7 64 L18 60 L28 68 L40 64 V73 H7Z" fill="#6e5a48" />
      <path d="M12 58 L20 54 L26 60 L20 62Z" fill="#fff" />
    </g>
    <path d="M44 54 L36 78 Q36 84 58 84 Q82 84 82 78 L74 54Z" fill="#c9ced2" opacity="0.92" />
    <path d="M48 58 L44 74 H74 L70 58Z" fill="#e8ecee" />
    <path d="M52 62 l6 4 l4 -5 l3 9 l-9 3Z" fill="#5f7f96" />
    <rect x="41" y="39" width="36" height="17" rx="5" fill="#141414" />
    <ellipse cx="59" cy="41" rx="17" ry="3" fill="#3b3b3b" />
  </>
);
const BookStackArt = () => (
  <>
    <rect x="21" y="-7" width="38" height="20" fill="#d9dde2" />
    <rect x="24" y="-5" width="16" height="8" fill="#7d96b3" />
    <rect x="44" y="-5" width="14" height="8" fill="#46658a" />
    <rect x="12" y="3" width="56" height="82" rx="2" fill="#2a2a2c" />
    <rect x="17" y="3" width="51" height="82" fill="#fafafa" />
    <rect x="19" y="7" width="47" height="3" fill="#e39a3b" />
    <g fontFamily="'Open Sans', sans-serif" textAnchor="middle">
      <text x="40" y="18" fontSize="4" fill="#333">Alistair Croll &amp; Benjamin</text>
      <text x="42.500" y="42" fontSize="29" fill="#e39a3b" stroke="#e39a3b" strokeWidth="0.600" textLength="50" lengthAdjust="spacingAndGlyphs">LEAN</text>
      <text x="42.500" y="56" fontSize="16.500" fontWeight="700" fill="#1b1b1b" textLength="50" lengthAdjust="spacingAndGlyphs">ANALYTICS</text>
      <text x="42" y="64" fontSize="6.500" fontWeight="600" fill="#333" textLength="34" lengthAdjust="spacingAndGlyphs">Use Data to Build a</text>
      <text x="42" y="71" fontSize="6.500" fontWeight="600" fill="#e39a3b" textLength="38" lengthAdjust="spacingAndGlyphs">Better Startup Faster</text>
    </g>
    <path d="M47 -6 L68 25 Q56 26 50 24 Q50 8 47 -6Z" fill="#e6e6e6" />
  </>
);
const SheetWindowArt = () => (
  <>
    <rect x="-6" y="14" width="92" height="52" fill="#fdfdfd" />
    <rect x="-6" y="14" width="92" height="12" fill="#3c3c3c" />
    <path d="M-2 17 H60 M2 20 H84" stroke="#8a8a8a" strokeWidth="1.200" strokeDasharray="2 2" />
    <path d="M-2 29 H16 M-2 32 H14 M-2 35 H16 M-2 38 H14 M-2 46 H8" stroke="#aaa" strokeWidth="1" />
    <rect x="-4" y="39" width="22" height="2" fill="#fdf22f" />
    <rect x="9" y="28" width="9" height="12" fill="#f6d764" />
    <rect x="9" y="46" width="9" height="6" fill="#f6c73b" />
    <rect x="25" y="28" width="57" height="15" fill="none" stroke="#888" strokeWidth="0.600" />
    <path d="M36 31 h10 M49 31 h10 M60 31 h10 M72 31 h9 M49 36 h10 M36 41 h10 M60 41 h10" stroke="#2f8a45" strokeWidth="2.500" />
    <path d="M36 34 h10 M60 36 h10 M72 38 h9 M49 40 h10" stroke="#f3a8a8" strokeWidth="2" />
    <path d="M40 52 H84 M40 56 H84 M40 60 H84" stroke="#c9c9c9" strokeWidth="0.800" strokeDasharray="5 4" />
    <rect x="-6" y="64" width="92" height="2" fill="#4c4c4c" />
    <g transform="translate(55 54) scale(0.380)"><ExcelArt /></g>
  </>
);
const ChatWindowArt = ({ blue }: { blue?: boolean }) => (
  <>
    <rect x="-6" y="14" width="92" height="52" fill={blue ? "#172430" : "#0d1517"} />
    <rect x="-6" y="14" width="28" height="52" fill={blue ? "#1f2c3a" : "#1b2428"} />
    <rect x="-6" y={blue ? 30 : 34} width="28" height="4" fill={blue ? "#44719c" : "#39444a"} />
    <g stroke={blue ? "#7b8fa3" : "#75858b"} strokeWidth="1" strokeDasharray="6 3">
      <path d="M1 19 H18 M1 24 H18 M1 29 H18 M1 39 H18 M1 44 H18 M1 49 H18 M1 54 H18 M1 59 H18" />
    </g>
    <g fill={blue ? "#c06a4a" : "#d08a52"}>
      {[20, 25, 30, 40, 45, 50, 55, 60].map((y) => (
        <circle key={y} cx="-3" cy={y} r="1.600" />
      ))}
    </g>
    {blue ? (
      <>
        <rect x="28" y="21" width="16" height="5" fill="#4e3a27" />
        <path d="M28 29 h10 M28 33 h8" stroke="#3c88cf" strokeWidth="1.500" />
        <rect x="27" y="36" width="18" height="10" fill="#f3f6fa" />
        <path d="M30 44 Q36 38 42 38" stroke="#3c88cf" strokeWidth="1" fill="none" />
        <path d="M26 53 H48 M26 57 H84 M26 61 H52" stroke="#6b8296" strokeWidth="0.900" />
      </>
    ) : (
      <>
        <circle cx="31" cy="21" r="3" fill="#d9c9b6" />
        <rect x="28" y="25" width="17" height="7" fill="#22332b" />
        <rect x="28" y="34" width="17" height="12" fill="#22332b" />
        <rect x="32" y="37" width="7" height="7" fill="#d8434b" />
        <path d="M50 49 H58 M48 52 H60" stroke="#7a8588" strokeWidth="0.900" />
        <path d="M28 56 H36" stroke="#a0562e" strokeWidth="1.500" />
      </>
    )}
    <g transform="translate(54 54) scale(0.380)">{blue ? <TelegramArt /> : <WhatsAppArt />}</g>
  </>
);
const TrashArt = () => (
  <>
    <path d="M5 6 L13 76 Q14 84 40 84 Q66 84 67 76 L75 6Z" fill="url(#trash)" opacity="0.95" />
    <ellipse cx="40" cy="5.500" rx="35" ry="8" fill="#6d5f75" stroke="#8c8c96" strokeWidth="1.500" />
  </>
);

function Defs() {
  return (
    <svg className="absolute size-0" aria-hidden="true">
      <defs>
        <Grad id="finder" from="#56bff8" to="#2f6de9" />
        <Grad id="finderR" from="#f1f2f6" to="#d2d8e2" />
        <Grad id="tile" from="#ffffff" to="#dcdcdc" />
        <Grad id="saf" from="#46a4ea" to="#2c68db" />
        <Grad id="con" from="#b08c54" to="#94703b" />
        <Grad id="notes" from="#ffffff" to="#e6e2db" />
        <Grad id="notesTop" from="#f9db6d" to="#f6c637" />
        <Grad id="green" from="#87ee80" to="#56bc47" />
        <Grad id="soft" from="#fdfefd" to="#bfe6b8" />
        <Grad id="pod" from="#b868e6" to="#6c2dac" />
        <Grad id="books" from="#f2a43c" to="#ea7431" />
        <Grad id="appst" from="#4eb4ee" to="#2359d6" />
        <Grad id="set" from="#d9e0e7" to="#8b8a86" />
        <Grad id="wa" from="#78cb70" to="#4caf45" />
        <Grad id="tg" from="#58aee6" to="#3b8bc9" />
        <Grad id="qt" from="#50555b" to="#060606" />
        <Grad id="qring" from="#eef2f8" to="#a1a6ad" />
        <Grad id="qblue" from="#1f53d9" to="#63ecfb" />
        <Grad id="sky" from="#8fb2e8" to="#bccdf0" />
        <Grad id="act" from="#161719" to="#26282d" />
        <Grad id="trash" from="#5c5f66" to="#7c8085" />
        <linearGradient id="pyc" x1="0" y1="0" x2="0.6" y2="0.5">
          <stop offset="0" stopColor="#3ecf95" />
          <stop offset="0.4" stopColor="#8fe27c" />
          <stop offset="0.7" stopColor="#fbf66a" />
        </linearGradient>
      </defs>
    </svg>
  );
}

type App = { name: string; art: ReactNode; open?: boolean; badge?: string };

const APPS: App[] = [
  { name: "Finder", art: <FinderArt />, open: true },
  { name: "Launchpad", art: <LaunchpadArt /> },
  { name: "Safari", art: <SafariArt />, open: true },
  { name: "Contacts", art: <ContactsArt /> },
  { name: "Calendar", art: <CalendarArt /> },
  { name: "Notes", art: <NotesArt /> },
  { name: "Excel", art: <ExcelArt />, open: true },
  { name: "Word", art: <ExcelArt word /> },
  { name: "Photos", art: <PhotosArt /> },
  { name: "FaceTime", art: <FaceTimeArt /> },
  { name: "Messages", art: <MessagesArt />, open: true, badge: "12" },
  { name: "Podcasts", art: <PodcastsArt /> },
  { name: "Books", art: <BooksArt /> },
  { name: "App Store", art: <AppStoreArt /> },
  { name: "Preferences", art: <SettingsArt />, badge: "1" },
  { name: "WhatsApp", art: <WhatsAppArt />, open: true },
  { name: "Chrome", art: <ChromeArt /> },
  { name: "PyCharm", art: <PyCharmArt />, open: true },
];
const RECENT: App[] = [
  { name: "Activity", art: <ActivityArt />, open: true },
  { name: "TextEdit", art: <TextEditArt />, open: true },
  { name: "Numbers", art: <NumbersArt />, open: true },
  { name: "Telegram", art: <TelegramArt />, open: true, badge: "84" },
  { name: "QuickTime", art: <QuickTimeArt />, open: true },
  { name: "Preview", art: <PreviewArt />, open: true },
];
const MINIMISED: App[] = [
  { name: "Documents", art: <BookStackArt /> },
  { name: "Spreadsheet", art: <SheetWindowArt /> },
  { name: "Chat", art: <ChatWindowArt /> },
  { name: "Channel", art: <ChatWindowArt blue /> },
  { name: "Trash", art: <TrashArt /> },
];

function DockSlot({ app }: { app: App }) {
  return (
    <div className="relative flex w-[106.100px] shrink-0 flex-col items-center pt-[18px]">
      <svg className="size-20 overflow-visible drop-shadow-[0_1px_2px_rgba(0,0,0,0.35)]" viewBox="0 0 80 80">
        {app.art}
      </svg>
      {app.open && <span className="mt-[17px] size-2 rounded-full bg-[#b3b9e6]" />}
      {app.badge && (
        <span className="absolute top-[9px] right-0 flex size-[38px] items-center justify-center rounded-full bg-[#e2493c] text-[22px] leading-none text-white shadow-[0_1px_3px_rgba(0,0,0,0.4)]">
          {app.badge}
        </span>
      )}
    </div>
  );
}

const Divider = ({ className }: { className: string }) => <span className={`mt-[12px] h-[96px] w-[2px] shrink-0 bg-[#7b7299] ${className}`} />;

function Dock() {
  return (
    <div className="mt-[19px] ml-[89px] flex h-[130px] w-[3183px] rounded-[40px] border-2 border-white/20 bg-[linear-gradient(to_right,#24375b_0%,#2d3964_25%,#38366a_52%,#45355f_72%,#5a3660_100%)] pl-[2px] shadow-[0_0_0_1px_rgba(0,0,0,0.5)]">
      {APPS.map((a) => (
        <DockSlot key={a.name} app={a} />
      ))}
      <Divider className="ml-[25px] mr-[22px]" />
      {RECENT.map((a) => (
        <DockSlot key={a.name} app={a} />
      ))}
      <Divider className="ml-[24px] mr-[22px]" />
      {MINIMISED.map((a) => (
        <DockSlot key={a.name} app={a} />
      ))}
    </div>
  );
}

/* --------------------------------------------------------------------- app */

export default function App() {
  return (
    <div className="flex h-[2100px] w-[3360px] flex-col overflow-hidden bg-[radial-gradient(ellipse_700px_130px_at_3400px_1950px,#8a2c4e_0%,rgba(138,44,78,0.600)_50%,transparent_100%),linear-gradient(to_bottom,#b5365a_0px,#b5365a_90px,transparent_91px),linear-gradient(to_right,#1d4066_0%,#28466f_40%,#32436f_70%,#4a4d83_100%)] font-['Inter','Liberation_Sans',sans-serif]">
      <Defs />
      <MenuBar />
      <section className="relative flex h-[1894px] shrink-0 flex-col border-t border-black">
        <div className="relative z-10 flex h-full flex-col overflow-hidden rounded-[20px] bg-white shadow-[0_40px_70px_-8px_rgba(4,2,10,0.980),0_0_0_1px_rgba(0,0,0,0.900)]">
          <Toolbar />
          <TabBar />
          <Problem />
          <div className="pointer-events-none absolute inset-x-0 bottom-0 h-[70px] bg-linear-to-b from-transparent to-black/8 [mask-image:linear-gradient(to_right,transparent_40px,black_400px,black_2950px,transparent_3320px)]" />
        </div>
      </section>
      <Dock />
    </div>
  );
}
